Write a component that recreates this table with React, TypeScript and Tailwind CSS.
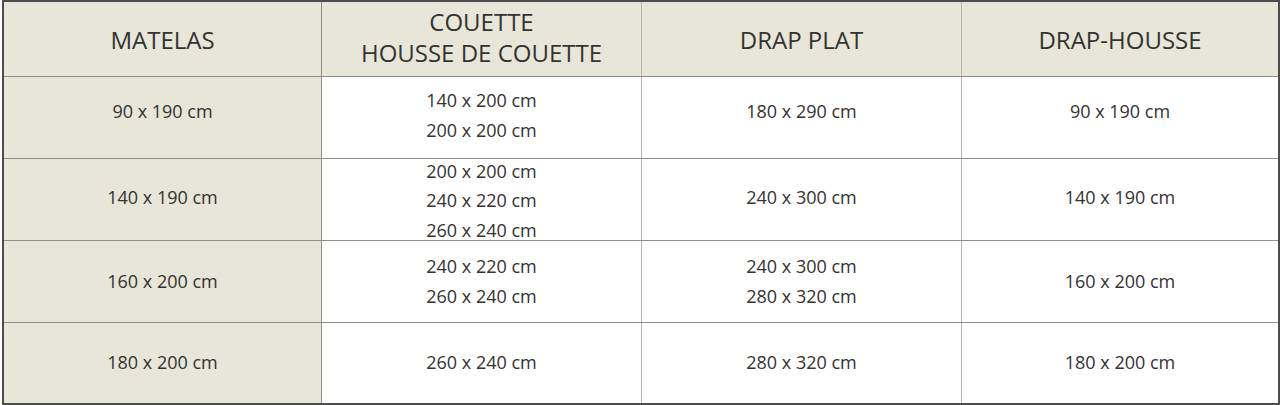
import React from "react";

type Cell = { lines: string[]; pad?: string };

const header: Cell[] = [
  { lines: ["MATELAS"] },
  { lines: ["COUETTE", "HOUSSE DE COUETTE"], pad: "pb-[5px]" },
  { lines: ["DRAP PLAT"] },
  { lines: ["DRAP-HOUSSE"] },
];

const rows: { h: string; cells: Cell[] }[] = [
  {
    h: "h-[82px]",
    cells: [
      { lines: ["90 x 190 cm"], pad: "pb-[11px]" },
      { lines: ["140 x 200 cm", "200 x 200 cm"], pad: "pb-[4px]" },
      { lines: ["180 x 290 cm"], pad: "pb-[11px]" },
      { lines: ["90 x 190 cm"], pad: "pb-[11px]" },
    ],
  },
  {
    h: "h-[82px]",
    cells: [
      { lines: ["140 x 190 cm"], pad: "pb-[3px]" },
      { lines: ["200 x 200 cm", "240 x 220 cm", "260 x 240 cm"], pad: "pt-[3px]" },
      { lines: ["240 x 300 cm"], pad: "pb-[3px]" },
      { lines: ["140 x 190 cm"], pad: "pb-[3px]" },
    ],
  },
  {
    h: "h-[82px]",
    cells: [
      { lines: ["160 x 200 cm"] },
      { lines: ["240 x 220 cm", "260 x 240 cm"] },
      { lines: ["240 x 300 cm", "280 x 320 cm"] },
      { lines: ["160 x 200 cm"] },
    ],
  },
  {
    h: "h-[80px]",
    cells: [
      { lines: ["180 x 200 cm"] },
      { lines: ["260 x 240 cm"] },
      { lines: ["280 x 320 cm"] },
      { lines: ["180 x 200 cm"] },
    ],
  },
];

const colBorder = [
  "border-r border-[#8e8e86]",
  "border-r border-[#b4b4b4]",
  "border-r border-[#b4b4b4]",
  "",
];

export default function App() {
  return (
    <div className="w-[1280px] h-[405px] bg-white pl-[2px]">
      <div
        className="w-[1278px] h-[405px] border-2 border-[#4d4d4d] text-[#333333]"
        style={{ fontFamily: '"Open Sans", "Noto Sans", sans-serif' }}
      >
        <div className="grid grid-cols-[318px_320px_320px_316px] h-[75px] bg-[#e8e6d8] border-b border-[#8e8e86]">
          {header.map((c, i) => (
            <div
              key={i}
              className={`flex flex-col items-center justify-center text-[24px] leading-[31px] ${colBorder[i]} ${c.pad ?? ""}`}
            >
              {c.lines.map((l) => (
                <div key={l}>{l}</div>
              ))}
            </div>
          ))}
        </div>
        {rows.map((r, ri) => (
          <div
            key={ri}
            className={`grid grid-cols-[318px_320px_320px_316px] bg-white ${r.h} ${
              ri < rows.length - 1 ? "border-b border-[#8e8e8e]" : ""
            }`}
          >
            {r.cells.map((c, i) => (
              <div
                key={i}
                className={`flex flex-col items-center justify-center min-h-0 text-[18px] leading-[29.5px] ${colBorder[i]} ${
                  i === 0 ? "bg-[#e8e6d8]" : ""
                } ${c.pad ?? ""}`}
              >
                {c.lines.map((l) => (
                  <div key={l} className="shrink-0">{l}</div>
                ))}
              </div>
            ))}
          </div>
        ))}
      </div>
    </div>
  );
}
